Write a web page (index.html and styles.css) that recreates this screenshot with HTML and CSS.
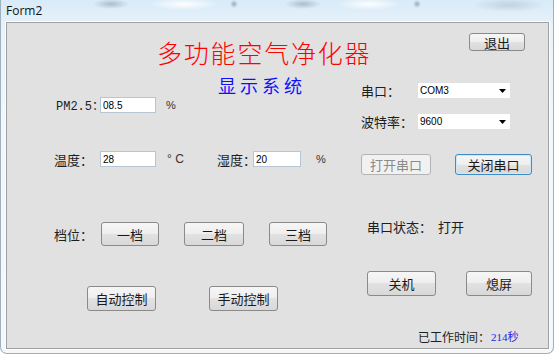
FILE: index.html
```html
<!DOCTYPE html>
<html lang="zh-CN">
<head>
  <meta charset="UTF-8">
  <title>Form2</title>
  <link rel="stylesheet" href="styles.css">
</head>
<body>

<div class="window">
  <div class="titlebar">Form2</div>

  <div class="client">
    <div class="header">
      <h1 class="title">多功能空气净化器</h1>
      <button class="btn btn-exit">退出</button>
    </div>

    <div class="panel">
      <!-- 左侧：数据显示和控制 -->
      <div class="left">
        <h2 class="subtitle">显示系统</h2>

        <div class="row row-pm">
          <label class="lbl lbl-pm" for="pm">PM2.5：</label>
          <input class="field field-pm" id="pm" type="text" value="08.5">
          <span class="unit unit-pm">%</span>
        </div>

        <div class="row row-temp">
          <label class="lbl lbl-temp" for="temp">温度：</label>
          <input class="field field-temp" id="temp" type="text" value="28">
          <span class="unit unit-deg">° C</span>
          <label class="lbl lbl-hum" for="hum">湿度：</label>
          <input class="field field-hum" id="hum" type="text" value="20">
          <span class="unit unit-hum">%</span>
        </div>

        <div class="row row-gear">
          <span class="lbl lbl-gear">档位：</span>
          <button class="btn gear gear-1">一档</button>
          <button class="btn gear gear-2">二档</button>
          <button class="btn gear gear-3">三档</button>
        </div>

        <div class="row row-mode">
          <button class="btn mode mode-auto">自动控制</button>
          <button class="btn mode mode-hand">手动控制</button>
        </div>
      </div>

      <!-- 右侧：串口设置 -->
      <div class="right">
        <div class="row row-port">
          <span class="lbl lbl-port">串口：</span>
          <div class="combo">
            <span>COM3</span>
            <svg width="7" height="4" viewBox="0 0 7 4"><path d="M0 0h7L3.5 4z" fill="#000"/></svg>
          </div>
        </div>

        <div class="row row-baud">
          <span class="lbl lbl-port">波特率：</span>
          <div class="combo">
            <span>9600</span>
            <svg width="7" height="4" viewBox="0 0 7 4"><path d="M0 0h7L3.5 4z" fill="#000"/></svg>
          </div>
        </div>

        <div class="row row-serial">
          <button class="btn btn-open" disabled>打开串口</button>
          <button class="btn btn-close">关闭串口</button>
        </div>

        <div class="row row-status">
          <span class="lbl lbl-status">串口状态：</span>
          <span class="lbl">打开</span>
        </div>

        <div class="row row-power">
          <button class="btn btn-off">关机</button>
          <button class="btn btn-screen">熄屏</button>
        </div>

        <div class="row row-time">
          <span class="lbl lbl-time">已工作时间：</span>
          <span class="time-value">214秒</span>
        </div>
      </div>
    </div>
  </div>
</div>

</body>
</html>
```

FILE: styles.css
```css
* {
  box-sizing: border-box;
}

body {
  margin: 0;
  background-color: #ffffff;
  font-family: "Noto Sans CJK SC", "Liberation Sans", sans-serif;
  font-size: 13px;
  color: #1e1e1e;
}

.window {
  width: 554px;
  height: 354px;
  border: 1px solid #9fb0bf;
  border-top: none;
  border-radius: 0 0 7px 7px;
  background:
    radial-gradient(ellipse 18px 5px at 110px 4px, rgba(90, 100, 110, 0.35), transparent),
    radial-gradient(ellipse 36px 6px at 183px 4px, rgba(255, 255, 255, 0.95), transparent),
    radial-gradient(ellipse 4px 4px at 233px 4px, rgba(80, 90, 100, 0.45), transparent),
    radial-gradient(ellipse 18px 5px at 302px 4px, rgba(90, 100, 110, 0.35), transparent),
    radial-gradient(ellipse 32px 6px at 368px 4px, rgba(255, 255, 255, 0.95), transparent),
    radial-gradient(ellipse 4px 4px at 416px 4px, rgba(80, 90, 100, 0.45), transparent),
    radial-gradient(ellipse 36px 7px at 508px 5px, rgba(120, 130, 140, 0.25), transparent),
    linear-gradient(#d8ebf8, #e9f3fa 30px, #f1f7fb 120px, #f4f8fb);
}

.titlebar {
  height: 22px;
  padding-left: 5px;
  font-family: "Open Sans", "Liberation Sans", sans-serif;
  font-size: 12px;
  line-height: 22px;
  color: #111111;
}

.client {
  margin-left: 5px;
  width: 543px;
  height: 327px;
  border: 1px solid #a0a0a0;
  background-color: #e1e1e1;
  box-shadow: 0 0 0 1px #fbfdfe;
  overflow: hidden;
}

/* 标题区 */
.header {
  display: flex;
  align-items: flex-start;
  height: 54px;
}

.title {
  margin: 17px 0 0 150px;
  font-size: 25px;
  line-height: 25px;
  font-weight: 300;
  letter-spacing: 1.8px;
  color: #ff0000;
}

.btn-exit {
  margin: 10px 23px 0 auto;
  width: 56px;
  height: 18px;
}

.subtitle {
  margin: -2px 0 0 211px;
  font-size: 18px;
  line-height: 20px;
  font-weight: normal;
  letter-spacing: 4px;
  color: #1010ff;
}

.panel {
  display: flex;
}

.left {
  width: 340px;
}

.right {
  flex: 1;
}

.row {
  display: flex;
  align-items: center;
}

.lbl {
  flex: none;
  white-space: nowrap;
}

/* 输入框 */
.field {
  flex: none;
  height: 16px;
  padding: 0 2px;
  border: 1px solid #b7c6d4;
  background-color: #ffffff;
  font-family: "Liberation Sans", sans-serif;
  font-size: 10px;
  color: #000000;
  outline: none;
}

.unit {
  font-family: "Liberation Sans", sans-serif;
  font-size: 11px;
  color: #333333;
}

/* 按钮 */
.btn {
  flex: none;
  padding: 0;
  border: 1px solid #8a8a8a;
  border-radius: 3px;
  background: linear-gradient(#f6f6f6, #eeeeee 50%, #e2e2e2 50%, #d8d8d8);
  font-family: "Noto Sans CJK SC", sans-serif;
  font-size: 13px;
  line-height: 1;
  color: #1a1a1a;
}

.btn-open {
  border-color: #b3b3b3;
  background: #f1f1f1;
  color: #8a8a8a;
}

.btn-close {
  border-color: #3c8cc8;
  box-shadow: inset 0 0 0 1px #cde9f8;
}

/* 左侧各行 */
.row-pm {
  margin-top: 2px;
  height: 16px;
}

.lbl-pm {
  margin-left: 49px;
  width: 44px;
  font-family: "Liberation Mono", "Noto Sans CJK SC", monospace;
  font-size: 12px;
}

.field-pm {
  width: 56px;
}

.unit-pm {
  margin-left: 10px;
}

.row-temp {
  margin-top: 38px;
  height: 16px;
}

.lbl-temp {
  margin-left: 47px;
  width: 46px;
}

.field-temp {
  width: 56px;
}

.unit-deg {
  margin-left: 11px;
  width: 50px;
  font-size: 12px;
}

.lbl-hum {
  width: 36px;
}

.field-hum {
  width: 48px;
}

.unit-hum {
  margin-left: 15px;
}

.row-gear {
  margin-top: 55px;
  height: 24px;
}

.lbl-gear {
  margin-left: 47px;
  width: 47px;
}

.gear {
  height: 24px;
}

.gear-1 {
  width: 58px;
}

.gear-2 {
  margin-left: 25px;
  width: 60px;
}

.gear-3 {
  margin-left: 25px;
  width: 58px;
}

.row-mode {
  margin-top: 40px;
  height: 25px;
}

.mode {
  width: 69px;
  height: 25px;
}

.mode-auto {
  margin-left: 80px;
}

.mode-hand {
  margin-left: 53px;
}

/* 右侧各行 */
.row-port {
  margin-top: 6px;
  height: 15px;
}

.row-baud {
  margin-top: 16px;
  height: 15px;
}

.lbl-port {
  margin-left: 14px;
  width: 57px;
}

.combo {
  display: flex;
  align-items: center;
  justify-content: space-between;
  width: 92px;
  height: 15px;
  padding: 0 4px 0 2px;
  background-color: #ffffff;
  font-family: "Liberation Sans", sans-serif;
  font-size: 10px;
  color: #000000;
}

.row-serial {
  margin-top: 25px;
  height: 21px;
}

.btn-open {
  margin-left: 14px;
  width: 70px;
  height: 21px;
}

.btn-close {
  margin-left: 24px;
  width: 77px;
  height: 21px;
}

.row-status {
  margin-top: 43px;
  height: 16px;
}

.lbl-status {
  margin-left: 20px;
  width: 71px;
}

.row-power {
  margin-top: 37px;
  height: 25px;
}

.btn-off {
  margin-left: 20px;
  width: 69px;
  height: 25px;
}

.btn-screen {
  margin-left: 30px;
  width: 66px;
  height: 25px;
}

.row-time {
  margin-top: 32px;
  height: 16px;
}

.lbl-time {
  margin-left: 71px;
  width: 73px;
  font-size: 12px;
}

.time-value {
  font-family: "Liberation Serif", "Noto Sans CJK SC", serif;
  font-size: 11px;
  color: #2323e0;
}
```
